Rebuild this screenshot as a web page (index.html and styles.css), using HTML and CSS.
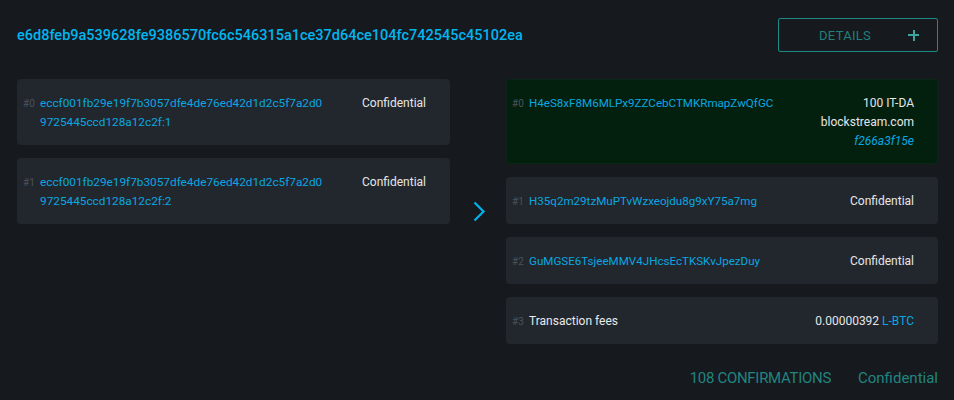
FILE: index.html
```html
<!DOCTYPE html>
<html>
<head>
<meta charset="utf-8">
<link rel="stylesheet" href="styles.css">
</head>
<body>
<div class="page">
  <div class="header">
    <div class="txid">e6d8feb9a539628fe9386570fc6c546315a1ce37d64ce104fc742545c45102ea</div>
    <div class="details-btn"><span class="details-label">DETAILS</span><span class="plus"></span></div>
  </div>
  <div class="tx">
    <div class="ins">
      <div class="card">
        <span class="idx">#0</span>
        <span class="addr addr-in">eccf001fb29e19f7b3057dfe4de76ed42d1d2c5f7a2d09725445ccd128a12c2f:1</span>
        <span class="amount">Confidential</span>
      </div>
      <div class="card">
        <span class="idx">#1</span>
        <span class="addr addr-in">eccf001fb29e19f7b3057dfe4de76ed42d1d2c5f7a2d09725445ccd128a12c2f:2</span>
        <span class="amount">Confidential</span>
      </div>
    </div>
    <div class="arrow">
      <svg width="13" height="21" viewBox="0 0 13 21"><path d="M1.5 1.5 L10.5 10.5 L1.5 19.5" fill="none" stroke="#00b3ee" stroke-width="2.2"/></svg>
    </div>
    <div class="outs">
      <div class="card card-green">
        <span class="idx">#0</span>
        <span class="addr">H4eS8xF8M6MLPx9ZZCebCTMKRmapZwQfGC</span>
        <span class="amount amount-stack">
          <span>100 IT-DA</span>
          <span>blockstream.com</span>
          <span class="asset-id">f266a3f15e</span>
        </span>
      </div>
      <div class="card">
        <span class="idx">#1</span>
        <span class="addr">H35q2m29tzMuPTvWzxeojdu8g9xY75a7mg</span>
        <span class="amount">Confidential</span>
      </div>
      <div class="card">
        <span class="idx">#2</span>
        <span class="addr">GuMGSE6TsjeeMMV4JHcsEcTKSKvJpezDuy</span>
        <span class="amount">Confidential</span>
      </div>
      <div class="card">
        <span class="idx">#3</span>
        <span class="label">Transaction fees</span>
        <span class="amount">0.00000392 <span class="unit">L-BTC</span></span>
      </div>
    </div>
  </div>
  <div class="footer">
    <span class="confs">108 CONFIRMATIONS</span>
    <span>Confidential</span>
  </div>
</div>
</body>
</html>
```

FILE: styles.css
```css
html, body {
  margin: 0;
  padding: 0;
  background: #16191e;
  font-family: Roboto, "Liberation Sans", sans-serif;
  color: #e4e6e8;
}

.page {
  padding: 18px 16px 0 17px;
}

.header {
  display: flex;
  justify-content: space-between;
  align-items: center;
  height: 34px;
  margin-bottom: 27px;
}

.txid {
  color: #00b6ef;
  font-size: 14.5px;
  font-weight: 500;
}

.details-btn {
  box-sizing: border-box;
  width: 160px;
  height: 34px;
  border: 1px solid #1d8a85;
  border-radius: 2px;
  display: flex;
  align-items: center;
  padding-left: 40px;
}

.details-label {
  color: #21807c;
  font-size: 13px;
  letter-spacing: 0.3px;
}

.plus {
  position: relative;
  width: 11px;
  height: 11px;
  margin-left: 37px;
}
.plus::before, .plus::after {
  content: "";
  position: absolute;
  background: #3aa59d;
}
.plus::before {
  left: 0; top: 4.5px; width: 11px; height: 2px;
}
.plus::after {
  left: 4.5px; top: 0; width: 2px; height: 11px;
}

.tx {
  display: flex;
}

.ins {
  width: 433px;
  display: flex;
  flex-direction: column;
  gap: 13px;
}

.arrow {
  width: 56px;
  display: flex;
  align-items: center;
  justify-content: center;
  padding-left: 2px;
  box-sizing: border-box;
}
.arrow svg { display: block; }

.outs {
  width: 432px;
  display: flex;
  flex-direction: column;
  gap: 13px;
}

.card {
  background: #22262d;
  border-radius: 4px;
  padding: 15px 24px 13px 6px;
  display: flex;
  align-items: flex-start;
  line-height: 19px;
  font-size: 12px;
}

.card-green {
  background: #03200f;
  box-shadow: inset 0 0 0 1px #0a2614;
}

.idx {
  width: 17px;
  flex: none;
  font-size: 10px;
  color: #4b525b;
}

.addr {
  color: #0aa7e0;
  word-break: break-all;
  flex: 1;
  font-size: 11.6px;
}

.addr-in {
  flex: none;
  width: 286px;
  font-size: 11.8px;
}

.label {
  flex: 1;
  color: #e8eaec;
}

.amount {
  margin-left: auto;
  white-space: nowrap;
  text-align: right;
  color: #e4e6e8;
}

.amount-stack {
  display: flex;
  flex-direction: column;
  align-items: flex-end;
}

.asset-id {
  color: #0aa7e0;
  font-style: italic;
}

.unit {
  color: #0aa7e0;
}

.footer {
  display: flex;
  justify-content: flex-end;
  gap: 27px;
  margin-top: 22px;
  line-height: 24px;
  font-size: 15px;
  color: #218580;
}

.confs {
  letter-spacing: -0.3px;
}
```
